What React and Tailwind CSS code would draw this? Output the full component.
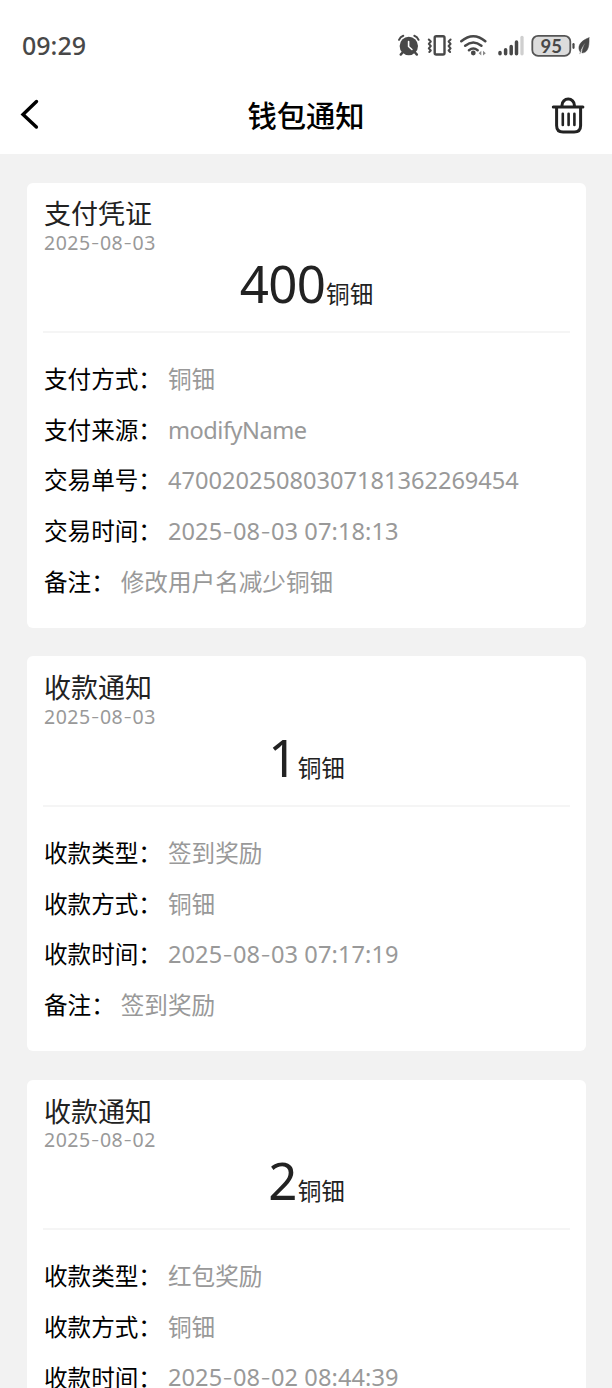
import React from "react";

const cards = [
  {
    title: "支付凭证", date: "2025-08-03", amount: "400",
    rows: [
      ["支付方式：", "铜钿"],
      ["支付来源：", "modifyName", "tracking-[-0.500px]"],
      ["交易单号：", "47002025080307181362269454"],
      ["交易时间：", "2025-08-03 07:18:13", "tracking-[0.080px]"],
      ["备注：", "修改用户名减少铜钿"],
    ],
  },
  {
    title: "收款通知", date: "2025-08-03", amount: "1",
    rows: [
      ["收款类型：", "签到奖励"],
      ["收款方式：", "铜钿"],
      ["收款时间：", "2025-08-03 07:17:19", "tracking-[0.080px]"],
      ["备注：", "签到奖励"],
    ],
  },
  {
    title: "收款通知", date: "2025-08-02", amount: "2",
    rows: [
      ["收款类型：", "红包奖励"],
      ["收款方式：", "铜钿"],
      ["收款时间：", "2025-08-02 08:44:39", "tracking-[0.080px]"],
      ["备注：", "红包奖励"],
    ],
  },
];

function StatusIcons() {
  return (
    <svg width="200" height="32" viewBox="395 30 200 32" fill="none" stroke="#484848" strokeLinecap="round" aria-hidden="true">
      {/* alarm */}
      <circle cx="408.800" cy="46" r="9.200" fill="#484848" stroke="none" />
      <path d="M403 52l-2.300 2.600M414.600 52l2.300 2.600" strokeWidth="2.400" />
      <path d="M399 39.800q1.300-3 4.300-4M418.600 39.800q-1.300-3-4.300-4" strokeWidth="2" />
      <path d="M408.600 41.500v5l3.300 3" stroke="#fff" strokeWidth="1.600" />
      {/* vibrate */}
      <rect x="434.700" y="36.200" width="9.800" height="18.300" rx="1.500" strokeWidth="2.400" />
      <path d="M428.800 39.500l2 2-2 2.300 2 2.200-2 2.300 2 2.200-1.500 1.500M450.600 39.500l-2 2 2 2.300-2 2.200 2 2.300-2 2.200 1.500 1.500" strokeWidth="2" strokeLinejoin="round" />
      {/* wifi */}
      <path d="M461.300 41.300q12-10.200 24 0M465.200 45.800q8.100-6.600 16.200 0M469 50.200q4.300-3.300 8.600 0" strokeWidth="2.500" />
      <circle cx="473.300" cy="53" r="2.400" fill="#484848" stroke="none" />
      <path d="M481.300 50.800v4.800l-2.600-2.400zM483 50.800v4.800l2.800-2.400z" fill="#888" stroke="none" />
      {/* signal */}
      <path d="M500 52.500v1.300M505.600 49.800v4M511.200 46.500v7.300M516.500 42v11.800" strokeWidth="3.500" />
      <path d="M522 37.500v16.300" stroke="#cfcfcf" strokeWidth="3.300" />
      {/* battery */}
      <rect x="532.300" y="35.800" width="38" height="20" rx="5.800" fill="#dcdcdc" stroke="#555" strokeWidth="1.800" />
      <path d="M573.500 44.200v3.600" strokeWidth="2.200" />
      <text x="551.200" y="52.500" textAnchor="middle" fill="#484848" stroke="none" className="font-['Lato'] text-[18.500px] font-bold">95</text>
      {/* leaf */}
      <path d="M589 37.800c-5.600 1.800-10.300 5.600-10.100 10.400.1 1.600.6 2.800 1.400 3.600 1-3.800 2.800-6.600 5.100-8.900-1.900 3-3.100 6.200-3.500 10 5.300.1 7.700-5 7.100-15.100zM580.900 50.500l-1 3.200" fill="#484848" stroke="#484848" strokeWidth="0.500" />
    </svg>
  );
}

/* Date or time string whose dashes use a wider glyph than the digits' own face */
function Figures({ text }) {
  return text.split(/(-)/).map((part, i) =>
    part === "-" ? <span key={i} className="font-['Inter'] font-light">-</span> : part
  );
}

function Card({ title, date, amount, rows }) {
  return (
    <section className="flex flex-col rounded-[6px] bg-white px-[16px] pb-[21px]">
      <div className="flex h-[150.200px] flex-col border-b-2 border-[#f5f5f5] pt-[15.900px]">
        <h2 className="pl-[1.500px] text-[27px] leading-[31px] text-[#222]">{title}</h2>
        <div className="pt-[0.800px] pl-[1.500px] text-[19.500px] leading-[26px] tracking-[0.500px] text-[#999]"><Figures text={date} /></div>
        <div className="-mt-[1.500px] flex items-baseline justify-center pl-[1px] text-[#222]">
          <span className="text-[51px] leading-[56px] tracking-[-0.700px]">{amount}</span>
          <span className="ml-[1px] text-[23.600px] leading-[30px]">铜钿</span>
        </div>
      </div>
      <dl className="flex flex-col pt-[21.100px] pl-[1.500px]">
        {rows.map(([label, value, tracking]) => (
          <div key={label} className="flex h-[50.650px] items-center gap-[6px] text-[23.600px] leading-[34px] whitespace-nowrap">
            <dt className="text-black">{label}</dt>
            <dd className={"text-[#999] " + (tracking || "")}><Figures text={value} /></dd>
          </div>
        ))}
      </dl>
    </section>
  );
}

export default function App() {
  return (
    <div lang="zh-CN" className="flex h-[1388px] w-[612px] flex-col overflow-hidden bg-[#f2f2f2] font-['Noto_Sans','Noto_Sans_CJK_SC',sans-serif]">
      <div className="flex h-[154px] shrink-0 flex-col bg-white">
        <div className="flex h-[76px] items-start justify-between pt-[30px] pr-[17px] pl-[22px]">
          <span className="text-[25px] leading-[31px] font-medium text-[#484848]">09:29</span>
          <StatusIcons />
        </div>
        <header className="flex h-[78px] items-center justify-between pr-[26px] pl-[18px]">
          <svg width="36" height="40" viewBox="18 95 36 40" fill="none" stroke="#000" strokeWidth="3.400" strokeLinecap="round" aria-hidden="true">
            <path d="M36.500 101.500L23 114.400l13.400 12.600" />
          </svg>
          <h1 className="pt-[1px] pl-[8px] text-[29.300px] leading-[40px] font-medium text-black">钱包通知</h1>
          <svg width="36" height="40" viewBox="550 94.500 36 40" fill="none" stroke="#222" strokeWidth="3" strokeLinecap="round" aria-hidden="true">
            <path d="M553.300 106.500h29.600M562 106v-1.300a6.200 6.200 0 0 1 12.400 0v1.300M556.600 107v18q0 6.500 6.500 6.500h11q6.500 0 6.500-6.500v-18" />
            <path d="M562.800 113.300v11.200M568.600 113.300v11.200M574.400 113.300v11.200" strokeWidth="2.600" />
          </svg>
        </header>
      </div>
      <main className="flex flex-col gap-[28.400px] px-[26.500px] pt-[28.600px]">
        {cards.map((c, i) => <Card key={i} {...c} />)}
      </main>
    </div>
  );
}
